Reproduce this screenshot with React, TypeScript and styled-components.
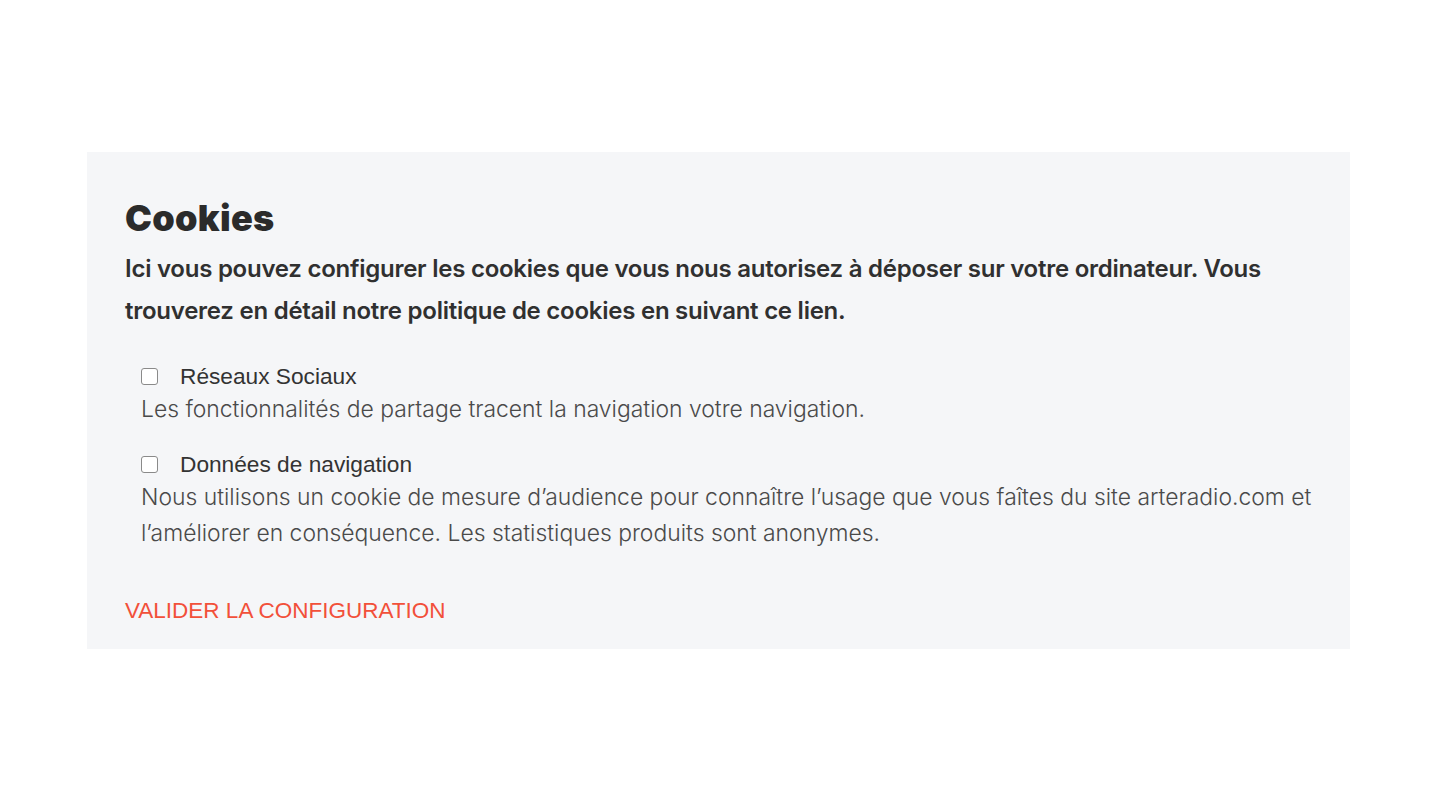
import React from "react";
import styled, { createGlobalStyle } from "styled-components";

const Global = createGlobalStyle`
  html, body { margin: 0; padding: 0; background: #ffffff; }
  body { font-family: "Inter", "Liberation Sans", sans-serif; }
`;

const Page = styled.div`
  padding: 152px 84px 0 87px;
`;

const Panel = styled.section`
  background: #f5f6f8;
  width: 1263px;
  height: 497px;
  box-sizing: border-box;
  padding: 40px 38px 0 38px;
  display: flex;
  flex-direction: column;
`;

const Title = styled.h2`
  margin: 0 0 4px 0;
  font-family: "Inter", sans-serif;
  font-weight: 900;
  font-size: 36px;
  line-height: 52px;
  color: #2b2b2b;
  letter-spacing: 0.3px;
`;

const Intro = styled.p`
  margin: 0;
  font-family: "Inter", sans-serif;
  font-weight: 600;
  font-size: 24px;
  line-height: 42px;
  color: #303030;
  letter-spacing: -0.25px;
  white-space: nowrap;
`;

const Options = styled.div`
  display: flex;
  flex-direction: column;
  gap: 22px;
  padding: 29px 0 0 16px;
`;

const Option = styled.div`
  display: flex;
  flex-direction: column;
`;

const LabelRow = styled.label`
  display: flex;
  align-items: center;
  gap: 22px;
  font-family: "Liberation Sans", Arial, sans-serif;
  font-size: 22.7px;
  line-height: 30px;
  color: #333;
`;

const Box = styled.input`
  width: 17px;
  height: 17px;
  margin: 0;
  appearance: none;
  border: 1px solid #8a8a8a;
  border-radius: 3px;
  background: #ffffff;
`;

const Desc = styled.p`
  margin: 0;
  font-family: "Inter", sans-serif;
  font-weight: 300;
  font-size: 22.9px;
  line-height: 36px;
  color: #4a4a4a;
  white-space: nowrap;
`;

const Validate = styled.button`
  align-self: flex-start;
  margin-top: 47px;
  padding: 0;
  border: none;
  background: none;
  font-family: "Liberation Sans", Arial, sans-serif;
  font-size: 22.5px;
  line-height: 26px;
  color: #f2503a;
  text-transform: uppercase;
  cursor: pointer;
`;

export default function App() {
  return (
    <>
      <Global />
      <Page>
        <Panel>
          <Title>Cookies</Title>
          <Intro>
            Ici vous pouvez configurer les cookies que vous nous autorisez à déposer sur votre ordinateur. Vous
            <br />
            trouverez en détail notre politique de cookies en suivant ce lien.
          </Intro>
          <Options>
            <Option>
              <LabelRow>
                <Box type="checkbox" />
                Réseaux Sociaux
              </LabelRow>
              <Desc>Les fonctionnalités de partage tracent la navigation votre navigation.</Desc>
            </Option>
            <Option>
              <LabelRow>
                <Box type="checkbox" />
                Données de navigation
              </LabelRow>
              <Desc>
                Nous utilisons un cookie de mesure d’audience pour connaître l’usage que vous faîtes du site arteradio.com et
                <br />
                l’améliorer en conséquence. Les statistiques produits sont anonymes.
              </Desc>
            </Option>
          </Options>
          <Validate>Valider la configuration</Validate>
        </Panel>
      </Page>
    </>
  );
}
